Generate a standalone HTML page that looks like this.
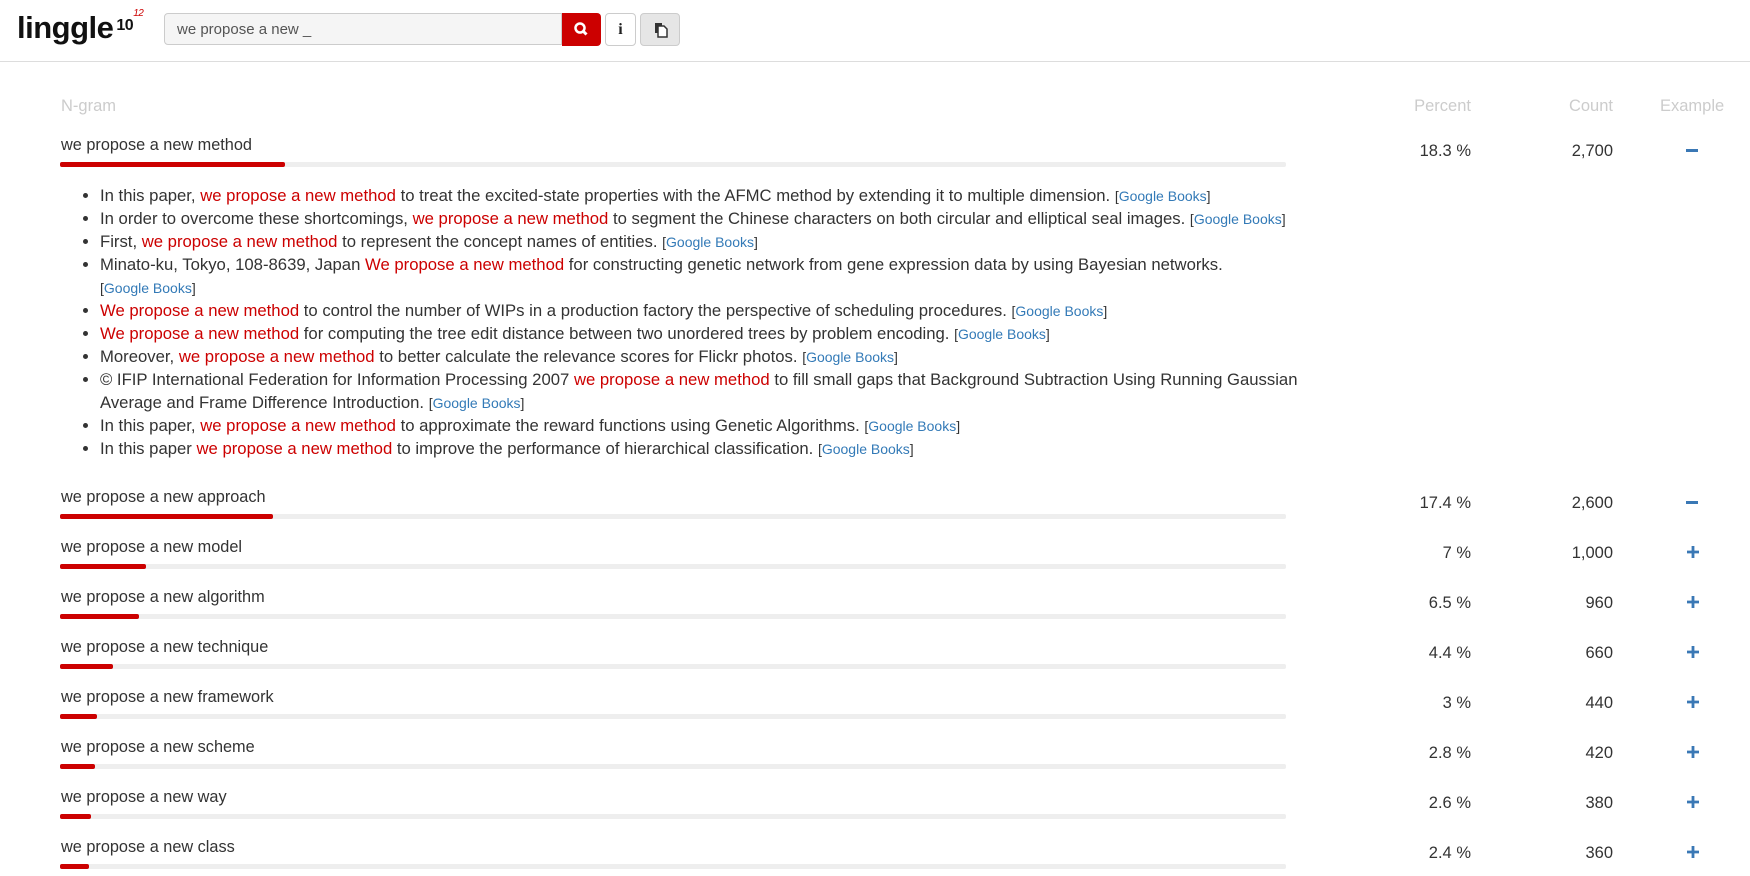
<!DOCTYPE html><html><head><style>
body{margin:0;width:1750px;height:876px;overflow:hidden;background:#fff;font-family:"Liberation Sans",Arial,sans-serif;color:#333;position:relative}
.a{position:absolute}
.hdr{left:0;top:0;width:1750px;height:61px;border-bottom:1px solid #ddd}
.logo{left:17px;top:8px;font-size:31px;font-weight:bold;letter-spacing:-0.5px;color:#111}
.inp{left:164px;top:13px;width:398px;height:32px;border:1px solid #ccc;border-radius:4px 0 0 4px;background:#f5f5f5;font-size:15px;line-height:32px;padding-left:12px;box-sizing:border-box;color:#555}
.btnr{left:562px;top:13px;width:39px;height:33px;background:#c00;border-radius:0 4px 4px 0}
.btn{top:13px;height:33px;border:1px solid #ccc;border-radius:4px;box-sizing:border-box}
.th{top:97px;font-size:16.5px;color:#ccc}
.ng{left:61px;font-size:16.3px;color:#333}
.gb{left:60px;width:1226px;height:5px;background:#eee;border-radius:2px}
.rb{left:60px;height:5px;background:#c00;border-radius:2px}
.num{font-size:16.5px;text-align:right}
.pc{left:1371px;width:100px}
.ct{left:1513px;width:100px}
.mi{left:1686px;width:12px;height:3px;background:#3a78b5}
.pl{left:1687px;width:12px;height:12px}
ul{position:absolute;left:60px;top:184px;width:1211px;margin:0;padding-left:40px;font-size:16.7px;line-height:23px}
li{height:auto}
.r{color:#c00}
.g{color:#337ab7}
.k{font-size:14px;line-height:0;white-space:nowrap}
</style></head><body>
<div class="a hdr"></div>
<div class="a logo">linggle<span style="font-size:16px;vertical-align:8px;margin-left:3px">10</span><span style="font-size:10px;color:#c00;font-style:italic;vertical-align:22px;font-weight:normal">12</span></div>
<div class="a inp">we propose a new _</div>
<div class="a btnr"><svg width="39" height="33"><circle cx="18" cy="15" r="4.5" fill="none" stroke="#fff" stroke-width="2.5"/><line x1="21" y1="18" x2="24.5" y2="21.5" stroke="#fff" stroke-width="3"/></svg></div>
<div class="a btn" style="left:605px;width:31px;background:#fff;font-family:'Liberation Serif',serif;font-weight:bold;font-size:16px;text-align:center;line-height:31px;color:#222">i</div>
<div class="a btn" style="left:640px;width:40px;background:#e6e6e6"><svg width="38" height="31"><rect x="14" y="9" width="7" height="10" fill="#333"/><path d="M17 12h6l3 3v8h-9z" fill="#fff" stroke="#333" stroke-width="1.5"/></svg></div>

<div class="a th" style="left:61px">N-gram</div>
<div class="a th" style="left:1371px;width:100px;text-align:right">Percent</div>
<div class="a th" style="left:1513px;width:100px;text-align:right">Count</div>
<div class="a th" style="left:1660px">Example</div>

<div class="a ng" style="top:136px">we propose a new method</div>
<div class="a gb" style="top:162px"></div><div class="a rb" style="top:162px;width:225px"></div>
<div class="a num pc" style="top:142px">18.3 %</div><div class="a num ct" style="top:142px">2,700</div>
<div class="a mi" style="top:149px"></div>

<ul>
<li>In this paper, <span class="r">we propose a new method</span> to treat the excited-state properties with the AFMC method by extending it to multiple dimension. <span class="k">[<span class="g">Google Books</span>]</span></li>
<li>In order to overcome these shortcomings, <span class="r">we propose a new method</span> to segment the Chinese characters on both circular and elliptical seal images. <span class="k">[<span class="g">Google Books</span>]</span></li>
<li>First, <span class="r">we propose a new method</span> to represent the concept names of entities. <span class="k">[<span class="g">Google Books</span>]</span></li>
<li>Minato-ku, Tokyo, 108-8639, Japan <span class="r">We propose a new method</span> for constructing genetic network from gene expression data by using Bayesian networks. <span class="k">[<span class="g">Google Books</span>]</span></li>
<li><span class="r">We propose a new method</span> to control the number of WIPs in a production factory the perspective of scheduling procedures. <span class="k">[<span class="g">Google Books</span>]</span></li>
<li><span class="r">We propose a new method</span> for computing the tree edit distance between two unordered trees by problem encoding. <span class="k">[<span class="g">Google Books</span>]</span></li>
<li>Moreover, <span class="r">we propose a new method</span> to better calculate the relevance scores for Flickr photos. <span class="k">[<span class="g">Google Books</span>]</span></li>
<li>© IFIP International Federation for Information Processing 2007 <span class="r">we propose a new method</span> to fill small gaps that Background Subtraction Using Running Gaussian Average and Frame Difference Introduction. <span class="k">[<span class="g">Google Books</span>]</span></li>
<li>In this paper, <span class="r">we propose a new method</span> to approximate the reward functions using Genetic Algorithms. <span class="k">[<span class="g">Google Books</span>]</span></li>
<li>In this paper <span class="r">we propose a new method</span> to improve the performance of hierarchical classification. <span class="k">[<span class="g">Google Books</span>]</span></li>
</ul>

<div class="a ng" style="top:488px">we propose a new approach</div>
<div class="a gb" style="top:514px"></div><div class="a rb" style="top:514px;width:213px"></div>
<div class="a num pc" style="top:494px">17.4 %</div><div class="a num ct" style="top:494px">2,600</div>
<div class="a mi" style="top:501px"></div>

<svg width="0" height="0" style="position:absolute"><symbol id="p" viewBox="0 0 12 12"><path d="M6 0v12M0 6h12" stroke="#3a78b5" stroke-width="2.8"/></symbol></svg>

<div class="a ng" style="top:538px">we propose a new model</div>
<div class="a gb" style="top:564px"></div><div class="a rb" style="top:564px;width:86px"></div>
<div class="a num pc" style="top:544px">7 %</div><div class="a num ct" style="top:544px">1,000</div>
<svg class="a pl" style="top:546px"><use href="#p"/></svg>

<div class="a ng" style="top:588px">we propose a new algorithm</div>
<div class="a gb" style="top:614px"></div><div class="a rb" style="top:614px;width:79px"></div>
<div class="a num pc" style="top:594px">6.5 %</div><div class="a num ct" style="top:594px">960</div>
<svg class="a pl" style="top:596px"><use href="#p"/></svg>

<div class="a ng" style="top:638px">we propose a new technique</div>
<div class="a gb" style="top:664px"></div><div class="a rb" style="top:664px;width:53px"></div>
<div class="a num pc" style="top:644px">4.4 %</div><div class="a num ct" style="top:644px">660</div>
<svg class="a pl" style="top:646px"><use href="#p"/></svg>

<div class="a ng" style="top:688px">we propose a new framework</div>
<div class="a gb" style="top:714px"></div><div class="a rb" style="top:714px;width:37px"></div>
<div class="a num pc" style="top:694px">3 %</div><div class="a num ct" style="top:694px">440</div>
<svg class="a pl" style="top:696px"><use href="#p"/></svg>

<div class="a ng" style="top:738px">we propose a new scheme</div>
<div class="a gb" style="top:764px"></div><div class="a rb" style="top:764px;width:35px"></div>
<div class="a num pc" style="top:744px">2.8 %</div><div class="a num ct" style="top:744px">420</div>
<svg class="a pl" style="top:746px"><use href="#p"/></svg>

<div class="a ng" style="top:788px">we propose a new way</div>
<div class="a gb" style="top:814px"></div><div class="a rb" style="top:814px;width:31px"></div>
<div class="a num pc" style="top:794px">2.6 %</div><div class="a num ct" style="top:794px">380</div>
<svg class="a pl" style="top:796px"><use href="#p"/></svg>

<div class="a ng" style="top:838px">we propose a new class</div>
<div class="a gb" style="top:864px"></div><div class="a rb" style="top:864px;width:29px"></div>
<div class="a num pc" style="top:844px">2.4 %</div><div class="a num ct" style="top:844px">360</div>
<svg class="a pl" style="top:846px"><use href="#p"/></svg>
</body></html>
